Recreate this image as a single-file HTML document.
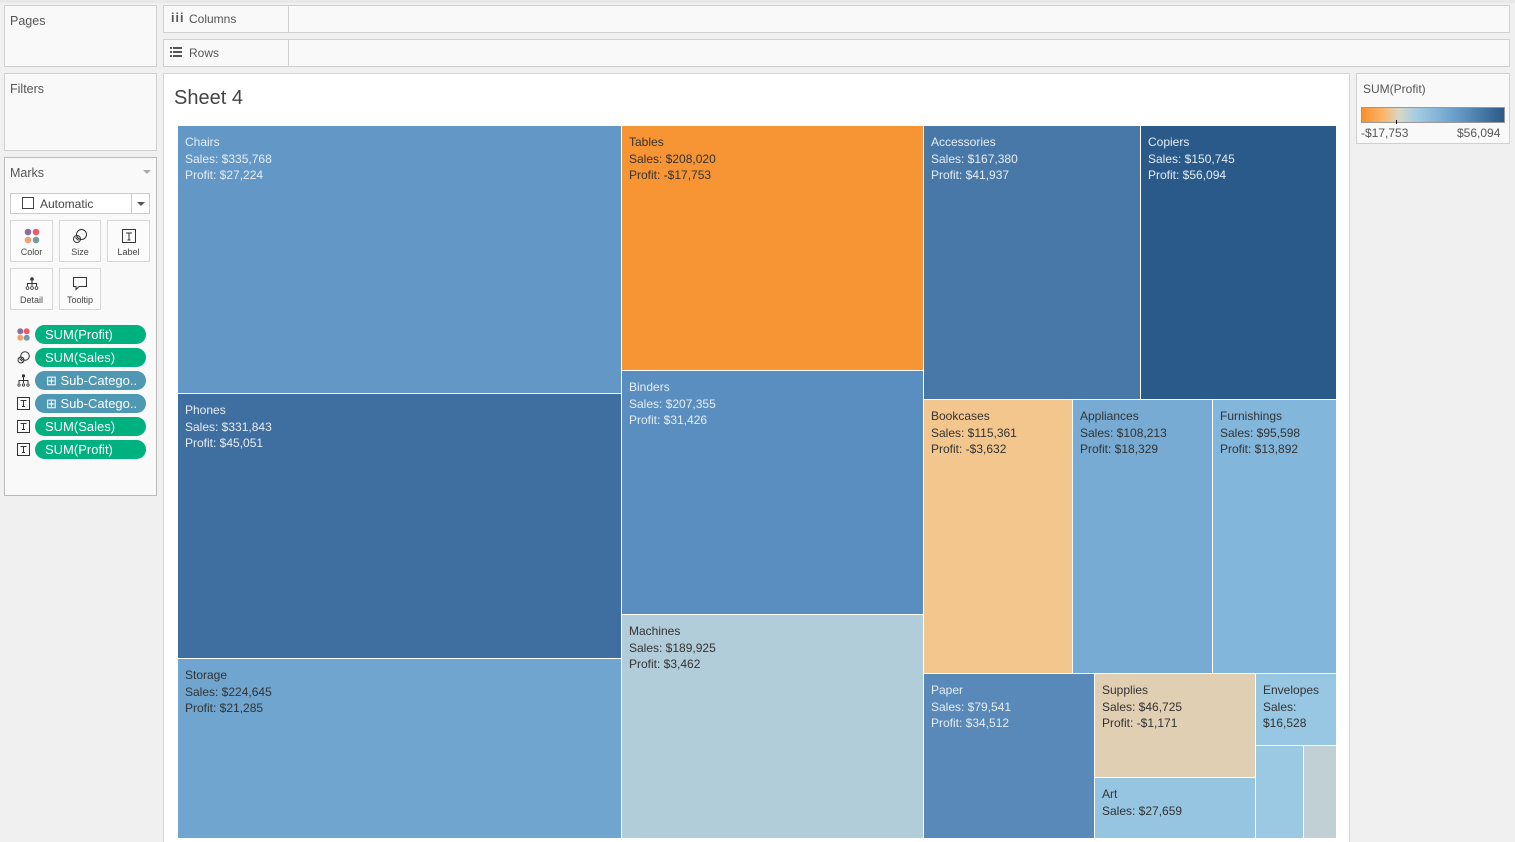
<!DOCTYPE html>
<html><head><style>
*{box-sizing:border-box;margin:0;padding:0}
body{width:1515px;height:842px;background:#f0f0f0;font-family:"Liberation Sans",sans-serif;position:relative;overflow:hidden;font-size:12px;color:#333}
.a{position:absolute}
.box{position:absolute;background:#f9f9f9;border:1px solid #d0d0d0}
.lbl{position:absolute;font-size:12.5px;color:#555}
.r{position:absolute;padding:8px 0 0 7px;font-size:12px;line-height:16.6px;white-space:nowrap;overflow:hidden}
.l{color:#e6edf5}.d{color:#333}
.card{position:absolute;background:#fbfbfb;border:1px solid #d6d6d6;text-align:center;font-size:9px;color:#444}
.card svg{display:block;margin:7px auto 3px}
.pill{position:absolute;left:35px;width:111px;height:19px;border-radius:10px;background:#00b180;color:#fff;font-size:13px;line-height:19px;padding-left:10px}
.pill.b{background:#4e98b4}
.ic{position:absolute;left:17px;width:13px;height:13px}
</style></head><body>
<div class="a" style="left:0;top:0;width:1515px;height:3px;background:#e8e8e8"></div>
<div class="box" style="left:4px;top:5px;width:153px;height:62px"></div><div class="lbl" style="left:10px;top:14px">Pages</div>
<div class="box" style="left:4px;top:73px;width:153px;height:78px"></div><div class="lbl" style="left:10px;top:82px">Filters</div>
<div class="box" style="left:4px;top:157px;width:153px;height:339px;border-color:#bbb"></div><div class="lbl" style="left:10px;top:166px">Marks</div>
<div class="a" style="left:143px;top:170px;border:4px solid transparent;border-top:4px solid #aaa"></div>
<div class="a" style="left:10px;top:193px;width:140px;height:21px;border:1px solid #ccc;background:#fff"></div>
<div class="a" style="left:22px;top:197px;width:12px;height:12px;border:1px solid #444"></div>
<div class="lbl" style="left:40px;top:197px;font-size:12px;color:#444">Automatic</div>
<div class="a" style="left:131px;top:194px;width:1px;height:19px;background:#ccc"></div>
<div class="a" style="left:137px;top:202px;border:4px solid transparent;border-top:4px solid #555"></div>
<div class="card" style="left:10px;top:220px;width:43px;height:42px"><svg width="16" height="16" viewBox="0 0 16 16"><circle cx="4" cy="4" r="3.3" fill="#8a6e9e"/><circle cx="12" cy="4" r="3.3" fill="#ef5a6b"/><circle cx="4" cy="12" r="3.3" fill="#f4a26b"/><circle cx="12" cy="12" r="3.3" fill="#6f9ea5"/></svg><div>Color</div></div>
<div class="card" style="left:59px;top:220px;width:42px;height:42px"><svg width="16" height="16" viewBox="0 0 16 16" fill="none" stroke="#333"><circle cx="9.5" cy="6.5" r="5"/><circle cx="5" cy="11" r="3.5"/><path d="M3.5 9.5l3 3"/></svg><div>Size</div></div>
<div class="card" style="left:107px;top:220px;width:43px;height:42px"><svg width="14" height="14" style="margin-top:8px;margin-bottom:4px" viewBox="0 0 14 14" fill="none" stroke="#333"><rect x=".5" y=".5" width="13" height="13"/><path d="M4 4h6M7 4v7M5.5 11h3"/></svg><div>Label</div></div>
<div class="card" style="left:10px;top:268px;width:43px;height:42px"><svg width="14" height="14" style="margin-top:8px;margin-bottom:4px" viewBox="0 0 14 14" fill="#333"><circle cx="7" cy="2" r="1.8"/><path d="M6.5 3h1v3h-1zM2 6h10v1H2zM2 6h1v3H2zM6.5 6h1v3h-1zM11 6h1v3h-1z"/><circle cx="2.5" cy="11" r="1.4" fill="none" stroke="#333" stroke-width=".8"/><circle cx="7" cy="11" r="1.4" fill="none" stroke="#333" stroke-width=".8"/><circle cx="11.5" cy="11" r="1.4" fill="none" stroke="#333" stroke-width=".8"/></svg><div>Detail</div></div>
<div class="card" style="left:59px;top:268px;width:42px;height:42px"><svg width="14" height="14" style="margin-top:8px;margin-bottom:4px" viewBox="0 0 14 14" fill="none" stroke="#333"><path d="M.5 .5h13v9H6l-3 3v-3H.5z"/></svg><div>Tooltip</div></div>
<svg class="ic" style="top:328px" viewBox="0 0 13 13"><circle cx="3.3" cy="3.3" r="3" fill="#8a6e9e"/><circle cx="9.7" cy="3.3" r="3" fill="#ef5a6b"/><circle cx="3.3" cy="9.7" r="3" fill="#f4a26b"/><circle cx="9.7" cy="9.7" r="3" fill="#6f9ea5"/></svg>
<div class="pill" style="top:325px">SUM(Profit)</div>
<svg class="ic" style="top:351px" viewBox="0 0 13 13" fill="none" stroke="#333"><circle cx="8" cy="5" r="4.3"/><circle cx="4" cy="9" r="3"/><path d="M2.5 7.5l3 3"/></svg>
<div class="pill" style="top:348px">SUM(Sales)</div>
<svg class="ic" style="top:374px" viewBox="0 0 13 13" fill="#333"><circle cx="6.5" cy="1.8" r="1.6"/><path d="M6 3h1v3H6zM1.5 6h10v1h-10zM1.5 6h1v3h-1zM6 6h1v3H6zM10.5 6h1v3h-1z"/><circle cx="2" cy="11" r="1.2" fill="none" stroke="#333" stroke-width=".8"/><circle cx="6.5" cy="11" r="1.2" fill="none" stroke="#333" stroke-width=".8"/><circle cx="11" cy="11" r="1.2" fill="none" stroke="#333" stroke-width=".8"/></svg>
<div class="pill b" style="top:371px;padding-left:11px">⊞ Sub-Catego..</div>
<svg class="ic" style="top:397px" viewBox="0 0 13 13" fill="none" stroke="#333"><rect x=".5" y=".5" width="12" height="12"/><path d="M3.5 3.5h6M6.5 3.5v6M5 9.5h3"/></svg>
<div class="pill b" style="top:394px;padding-left:11px">⊞ Sub-Catego..</div>
<svg class="ic" style="top:420px" viewBox="0 0 13 13" fill="none" stroke="#333"><rect x=".5" y=".5" width="12" height="12"/><path d="M3.5 3.5h6M6.5 3.5v6M5 9.5h3"/></svg>
<div class="pill" style="top:417px">SUM(Sales)</div>
<svg class="ic" style="top:443px" viewBox="0 0 13 13" fill="none" stroke="#333"><rect x=".5" y=".5" width="12" height="12"/><path d="M3.5 3.5h6M6.5 3.5v6M5 9.5h3"/></svg>
<div class="pill" style="top:440px">SUM(Profit)</div>

<div class="box" style="left:163px;top:5px;width:1347px;height:28px"></div>
<div class="a" style="left:288px;top:6px;width:1px;height:26px;background:#d0d0d0"></div>
<div class="lbl" style="left:171px;top:11px;font-weight:bold;color:#555;letter-spacing:1px">iii</div>
<div class="lbl" style="left:189px;top:12px;font-size:12px">Columns</div>
<div class="box" style="left:163px;top:39px;width:1347px;height:28px"></div>
<div class="a" style="left:288px;top:40px;width:1px;height:26px;background:#d0d0d0"></div>
<svg class="a" style="left:170px;top:47px" width="12" height="10" viewBox="0 0 12 10" fill="#555"><rect x="0" y="0" width="2" height="2"/><rect x="3" y="0" width="9" height="2"/><rect x="0" y="4" width="2" height="2"/><rect x="3" y="4" width="9" height="2"/><rect x="0" y="8" width="2" height="2"/><rect x="3" y="8" width="9" height="2"/></svg>
<div class="lbl" style="left:189px;top:46px;font-size:12px">Rows</div>

<div class="a" style="left:163px;top:73px;width:1187px;height:769px;background:#fff;border:1px solid #d6d6d6;border-bottom:none"></div>
<div class="a" style="left:174px;top:87px;font-size:20px;color:#444">Sheet 4</div>

<div class="r l" style="left:178px;top:126px;width:443px;height:267px;background:#6398c6">Chairs<br>Sales: $335,768<br>Profit: $27,224</div>
<div class="r l" style="left:178px;top:394px;width:443px;height:264px;background:#3f6fa1">Phones<br>Sales: $331,843<br>Profit: $45,051</div>
<div class="r d" style="left:178px;top:659px;width:443px;height:179px;background:#6fa5cf">Storage<br>Sales: $224,645<br>Profit: $21,285</div>
<div class="r d" style="left:622px;top:126px;width:301px;height:244px;background:#f79433">Tables<br>Sales: $208,020<br>Profit: -$17,753</div>
<div class="r l" style="left:622px;top:371px;width:301px;height:243px;background:#5b8ec0">Binders<br>Sales: $207,355<br>Profit: $31,426</div>
<div class="r d" style="left:622px;top:615px;width:301px;height:223px;background:#b1cdd9">Machines<br>Sales: $189,925<br>Profit: $3,462</div>
<div class="r l" style="left:924px;top:126px;width:216px;height:273px;background:#4878a8">Accessories<br>Sales: $167,380<br>Profit: $41,937</div>
<div class="r l" style="left:1141px;top:126px;width:195px;height:273px;background:#2a5a8a">Copiers<br>Sales: $150,745<br>Profit: $56,094</div>
<div class="r d" style="left:924px;top:400px;width:148px;height:273px;background:#f2c68d">Bookcases<br>Sales: $115,361<br>Profit: -$3,632</div>
<div class="r d" style="left:1073px;top:400px;width:139px;height:273px;background:#77abd3">Appliances<br>Sales: $108,213<br>Profit: $18,329</div>
<div class="r d" style="left:1213px;top:400px;width:123px;height:273px;background:#82b6db">Furnishings<br>Sales: $95,598<br>Profit: $13,892</div>
<div class="r l" style="left:924px;top:674px;width:170px;height:164px;background:#5889b9">Paper<br>Sales: $79,541<br>Profit: $34,512</div>
<div class="r d" style="left:1095px;top:674px;width:160px;height:103px;background:#e0cfb2">Supplies<br>Sales: $46,725<br>Profit: -$1,171</div>
<div class="r d" style="left:1095px;top:778px;width:160px;height:60px;background:#96c5e2">Art<br>Sales: $27,659</div>
<div class="r d" style="left:1256px;top:674px;width:80px;height:71px;background:#98c7e3">Envelopes<br>Sales:<br>$16,528</div>
<div class="a" style="left:1256px;top:746px;width:47px;height:92px;background:#9bc9e4"></div>
<div class="a" style="left:1304px;top:746px;width:32px;height:92px;background:#c0d0d4"></div>

<div class="box" style="left:1356px;top:73px;width:154px;height:71px"></div>
<div class="lbl" style="left:1363px;top:82px;font-size:12px">SUM(Profit)</div>
<div class="a" style="left:1361px;top:107px;width:144px;height:16px;border:1px solid #999;background:linear-gradient(90deg,#f7902f 0%,#fbb56a 15%,#d8d6c8 26%,#a5cde3 38%,#6b9fcb 65%,#2b5a89 100%)"></div>
<div class="a" style="left:1396px;top:120px;width:1px;height:4px;background:#000"></div>
<div class="lbl" style="left:1361px;top:126px;font-size:12px">-$17,753</div>
<div class="lbl" style="left:1457px;top:126px;font-size:12px">$56,094</div>
</body></html>
